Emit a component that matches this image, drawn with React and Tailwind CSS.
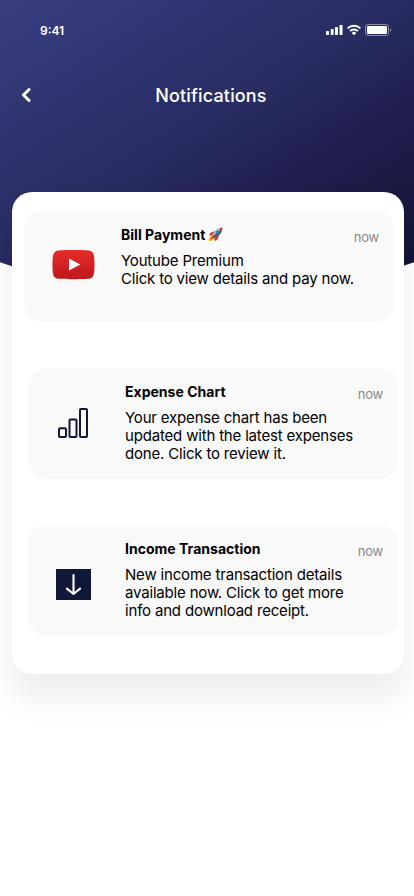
function StatusBar() {
  return (
    <div className="flex h-[60px] items-center justify-between pl-10 pr-[22px] text-white">
      <span className="pt-0.5 text-[12px] font-semibold leading-none">9:41</span>
      <svg width="66" height="12" viewBox="0 0 66 12" fill="currentColor" aria-hidden="true">
        <rect x="0" y="7" width="3" height="4" rx="0.7" />
        <rect x="4.7" y="5" width="3" height="6" rx="0.7" />
        <rect x="9" y="3" width="3" height="8" rx="0.7" />
        <rect x="13.5" y="1" width="3" height="10" rx="0.7" />
        <g fill="none" stroke="currentColor" strokeWidth="2">
          <path d="M21.600 4.400a9.200 9.200 0 0 1 12.800 0" />
          <path d="M24 7.100a5.800 5.800 0 0 1 8 0" />
        </g>
        <path d="M28 11.200 25.700 8.900a3.400 3.400 0 0 1 4.600 0Z" />
        <rect x="39.5" y="0.5" width="23" height="11" rx="2.6" fill="none" stroke="currentColor" opacity="0.45" />
        <rect x="41" y="2" width="20" height="8" rx="1.3" />
        <path d="M64 4.2v3.6a2 2 0 0 0 0-3.6Z" opacity="0.5" />
      </svg>
    </div>
  );
}

function YoutubeIcon() {
  return (
    <svg width="43" height="30" viewBox="0 0 43 30" aria-hidden="true">
      <defs>
        <linearGradient id="tube" x1="0" y1="0" x2="0" y2="1">
          <stop stopColor="#e52d27" />
          <stop offset="1" stopColor="#bf171d" />
        </linearGradient>
      </defs>
      <path
        fill="url(#tube)"
        d="M42.1 6.5s-.4-2.9-1.700-4.200C38.800.6 37 .6 36.200.5 30.300.1 21.500.1 21.500.1S12.700.1 6.800.5C6 .6 4.200.6 2.600 2.300 1.300 3.600.9 6.500.9 6.500S.5 9.900.5 13.300v3.200c0 3.400.4 6.400.4 6.400s.4 2.900 1.700 4.200c1.600 1.700 3.400 1.600 4.200 1.700 5.900.4 14.700.4 14.700.4s8.800 0 14.700-.4c.8-.1 2.600 0 4.200-1.700 1.300-1.300 1.700-4.200 1.700-4.200s.4-3 .4-6.400v-3.200c0-3.400-.4-6.800-.4-6.800Z"
      />
      <path fill="#fff" d="M17 8.500v12l11.300-6Z" />
    </svg>
  );
}

function ChartIcon() {
  return (
    <svg width="30" height="30" viewBox="0 0 30 30" fill="none" stroke="#111738" strokeWidth="2" aria-hidden="true">
      <rect x="1" y="20.200" width="7" height="8.800" rx="1" />
      <rect x="11.500" y="11.600" width="7" height="17.400" rx="1" />
      <rect x="22" y="1" width="7" height="28" rx="1" />
    </svg>
  );
}

function DownloadIcon() {
  return (
    <svg width="35" height="31" viewBox="0 0 35 31" aria-hidden="true">
      <path fill="#111738" d="M0 0h35v31H0z" />
      <path
        d="M17.500 6v18.700M10.900 19.600l6.600 5.400 6.600-5.400"
        fill="none"
        stroke="#fff"
        strokeWidth="2.100"
        strokeLinecap="round"
        strokeLinejoin="round"
      />
    </svg>
  );
}

function Rocket() {
  return (
    <svg width="15" height="15" viewBox="0 0 15 15" className="ml-[3px] -mt-0.5" aria-hidden="true">
      <path fill="#ffc83d" d="M3.800 8.300C1.500 9 .7 11.200.4 14.600c3-.2 5.300-1 6-3.200Z" />
      <path fill="#f2692b" d="M4 9.200c-1.500.8-2 2.200-2.200 3.700 1.700-.2 3-.8 3.600-2.100Z" />
      <path fill="#d92c27" d="M6.600 4.500C4.200 4.300 2.100 5.900 1 8.300l3.300.2ZM10.500 8.400c.3 2.500-1.200 4.600-3.600 5.700l-.4-3.300Z" />
      <path fill="#a9b8c6" d="M3.800 9.200C4.800 5.200 8.300 1.500 12.600 1l1.500 1.400c-.5 4.200-4.200 7.800-8.100 8.900Z" />
      <path fill="#57616d" d="m4.500 9.900 8.900-8.100.7.600c-.5 4.200-4.200 7.800-8.100 8.900Z" />
      <path fill="#d92c27" d="M11.400 1.400c1-.6 2.200-.8 3.200-.9-.1 1.100-.3 2.300-.9 3.300Z" />
      <circle cx="9.700" cy="5.400" r="1.500" fill="#2498df" stroke="#344658" strokeWidth=".6" />
      <path stroke="#c92724" strokeWidth="1.300" strokeLinecap="round" d="m4.500 10.500 2.300-2.300" />
    </svg>
  );
}

function Notification({ icon, title, badge, lines, shifted, iconClass }) {
  return (
    <article
      className={`flex h-[111px] w-[370px] rounded-[18px] bg-[#f9f9f9] ${shifted ? "ml-4" : "ml-3"}`}
    >
      <div className={`flex shrink-0 items-center justify-center ${iconClass}`}>
        {icon}
      </div>
      <div className={`flex-1 pt-[15px] ${shifted ? "pl-[7px]" : "-ml-px"}`}>
        <div className="flex h-[18px] items-center justify-between pr-[15px]">
          <h2 className="flex items-center whitespace-nowrap text-[14px] font-bold leading-[18px] tracking-[0.02px]">
            {title}
            {badge}
          </h2>
          <time className="relative top-0.5 text-[13px] leading-[18px] tracking-[-0.25px] text-[#8a8a8a]">now</time>
        </div>
        <p className="pt-2 text-[15px] leading-[18px] tracking-[-0.18px]">
          {lines.map((line) => (
            <span key={line} className="block whitespace-nowrap">{line}</span>
          ))}
        </p>
      </div>
    </article>
  );
}

export default function App() {
  return (
    <div className="h-[896px] w-[414px] overflow-hidden bg-white font-['Inter',sans-serif] text-black">
      <header className="h-[298px] bg-[linear-gradient(148deg,#383e81_0%,#282c62_46%,#212051_62%,#10112f_100%)] [clip-path:circle(636px_at_207px_-339px)]">
        <StatusBar />
        <div className="flex h-[70px] items-center">
          <button className="flex w-[52px] justify-center" aria-label="Back">
            <svg width="10" height="16" viewBox="0 0 10 16" fill="none" stroke="#fff" strokeWidth="2.900" strokeLinecap="round" strokeLinejoin="round">
              <path d="M8 2.600 2.400 8 8 13.400" />
            </svg>
          </button>
          <h1 className="flex-1 pr-11 pt-0.5 text-center text-[18px] font-medium leading-6 tracking-[0.15px] text-white">Notifications</h1>
        </div>
      </header>
      <main className="relative -mt-[106px] ml-3 flex h-[482px] w-[392px] flex-col gap-[46px] rounded-[20px] bg-white pt-[19px] shadow-[0_22px_35px_rgba(0,0,0,0.08)]">
        <Notification
          icon={<YoutubeIcon />}
          iconClass="w-[98px] pb-1"
          title="Bill Payment"
          badge={<Rocket />}
          lines={["Youtube Premium", "Click to view details and pay now."]}
        />
        <Notification
          shifted
          icon={<ChartIcon />}
          iconClass="w-[90px] pb-px"
          title="Expense Chart"
          lines={["Your expense chart has been", "updated with the latest expenses", "done. Click to review it."]}
        />
        <Notification
          shifted
          icon={<DownloadIcon />}
          iconClass="w-[90px] pt-2"
          title="Income Transaction"
          lines={["New income transaction details", "available now. Click to get more", "info and download receipt."]}
        />
      </main>
    </div>
  );
}
